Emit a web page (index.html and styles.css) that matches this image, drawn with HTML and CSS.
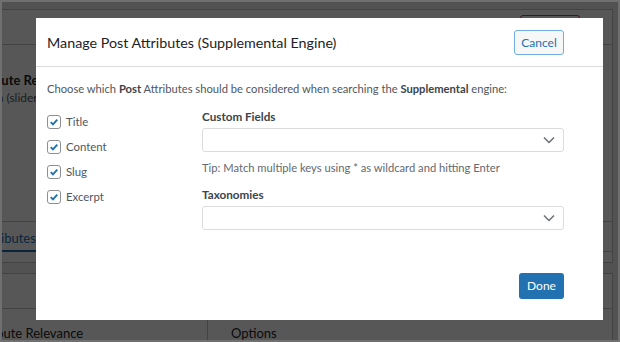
FILE: index.html
```html
<!DOCTYPE html>
<html lang="en">
<head>
	<meta charset="UTF-8">
	<meta name="viewport" content="width=device-width, initial-scale=1.0">
	<title>Manage Post Attributes</title>
	<link rel="stylesheet" href="styles.css">
</head>
<body>
	<div id="screen">
		<!-- page behind the modal -->
		<div class="panel">
			<div class="panel-head">
				<span class="btn-remove"></span>
				<span class="toggle">&#9650;</span>
			</div>
			<div class="panel-body">
				<p class="attr-title">Attribute Relevance</p>
				<p class="attr-desc">Search (slider)</p>
			</div>
			<div class="tabs">
				<span class="tab on">Post Attributes</span>
			</div>
			<div class="panel-foot"></div>
		</div>
		<div class="panel second">
			<div class="panel-head">
				<span class="btn-remove"></span>
				<span class="toggle">&#9650;</span>
			</div>
			<div class="cols">
				<div class="col-a">Attribute Relevance</div>
				<div class="col-b">Options</div>
			</div>
		</div>

		<div id="backdrop"></div>

		<div id="modal">
			<div class="modal-head">
				<h2>Manage Post Attributes (Supplemental Engine)</h2>
				<a href="javascript:;" class="btn-cancel">Cancel</a>
			</div>
			<div class="modal-body">
				<p class="intro">Choose which <b>Post</b> Attributes should be considered when searching the <b>Supplemental</b> engine:</p>
				<div class="grid">
					<ul class="checks">
						<li><span class="box"><svg viewBox="0 0 14 14"><path d="M3.2 7.2l2.6 2.7 5-5.6" /></svg></span>Title</li>
						<li><span class="box"><svg viewBox="0 0 14 14"><path d="M3.2 7.2l2.6 2.7 5-5.6" /></svg></span>Content</li>
						<li><span class="box"><svg viewBox="0 0 14 14"><path d="M3.2 7.2l2.6 2.7 5-5.6" /></svg></span>Slug</li>
						<li><span class="box"><svg viewBox="0 0 14 14"><path d="M3.2 7.2l2.6 2.7 5-5.6" /></svg></span>Excerpt</li>
					</ul>
					<div class="fields">
						<label>Custom Fields</label>
						<div class="select"><svg viewBox="0 0 12 8"><path d="M1 1.5l5 5 5-5" /></svg></div>
						<p class="tip">Tip: Match multiple keys using * as wildcard and hitting Enter</p>
						<label>Taxonomies</label>
						<div class="select"><svg viewBox="0 0 12 8"><path d="M1 1.5l5 5 5-5" /></svg></div>
					</div>
				</div>
			</div>
			<div class="modal-foot">
				<a href="javascript:;" class="btn-done">Done</a>
			</div>
		</div>
	</div>
</body>
</html>
```

FILE: styles.css
```css
* {
    margin: 0;
    padding: 0;
    box-sizing: border-box;
    text-decoration: none;
}

body {
    font-family: Lato, "Open Sans", sans-serif;
    color: #1d2327;
}

#screen {
    position: relative;
    width: 620px;
    height: 342px;
    overflow: hidden;
    background: #f0f0f1;
    border: 2px solid #707070;
    padding-top: 7px;
}

/* page behind */
.panel {
    margin-left: -80px;
    margin-right: 5px;
    background: #fff;
    border: 1px solid #c3c4c7;
}

.panel.second {
    margin-top: 10px;
}

.panel-head {
    display: flex;
    align-items: center;
    justify-content: flex-end;
    height: 35px;
    border-bottom: 1px solid #c3c4c7;
}

.btn-remove {
    width: 60px;
    height: 24px;
    border: 1px solid #d63638;
    border-radius: 3px;
    margin-right: 11px;
}

.toggle {
    width: 18px;
    font-size: 8px;
    color: #50575e;
    margin-right: 3px;
}

.panel-body {
    height: 176px;
    padding: 27px 0 0 45px;
    font-size: 13px;
}

.attr-title {
    font-weight: 700;
    line-height: 17px;
}

.attr-desc {
    color: #50575e;
    font-size: 12px;
    line-height: 17px;
}

.tabs {
    height: 31px;
    border-top: 1px solid #c3c4c7;
    border-bottom: 1px solid #c3c4c7;
    padding-left: 28px;
}

.tab {
    display: inline-block;
    height: 30px;
    line-height: 32px;
    font-size: 13px;
    color: #2271b1;
    border-bottom: 2px solid #2271b1;
}

.panel-foot {
    height: 10px;
}

.cols {
    display: flex;
    height: 40px;
    font-size: 13px;
}

.col-a {
    width: 285px;
    padding: 16px 0 0 48px;
    border-right: 1px solid #c3c4c7;
}

.col-b {
    padding: 16px 0 0 23px;
}

#backdrop {
    position: absolute;
    top: 0;
    left: 0;
    right: 0;
    bottom: 0;
    background: rgba(0, 0, 0, .66);
}

/* modal */
#modal {
    position: absolute;
    left: 34px;
    top: 16px;
    width: 567px;
    height: 302px;
    background: #fff;
    display: flex;
    flex-direction: column;
}

.modal-head {
    display: flex;
    align-items: center;
    justify-content: space-between;
    height: 49px;
    padding: 0 39px 0 11px;
    border-bottom: 1px solid #dcdcde;
}

.modal-head h2 {
    font-size: 14.3px;
    font-weight: 400;
    color: #1d2327;
}

.btn-cancel {
    display: block;
    width: 50px;
    height: 25px;
    line-height: 23px;
    text-align: center;
    font-size: 12px;
    color: #2271b1;
    background: #f6f7f7;
    border: 1px solid #72aee6;
    border-radius: 3px;
}

.modal-body {
    flex: 1;
    padding: 14px 39px 0 11px;
}

.intro {
    font-size: 11.2px;
    color: #50575e;
    line-height: 16px;
}

.intro b {
    font-weight: 700;
    color: #3c434a;
}

.grid {
    display: grid;
    grid-template-columns: 155px 1fr;
    margin-top: 11px;
}

.checks {
    list-style: none;
    padding-top: 1px;
}

.checks li {
    display: flex;
    align-items: center;
    height: 25px;
    font-size: 11.4px;
    color: #50575e;
}

.box {
    width: 14px;
    height: 14px;
    border: 1px solid #8c8f94;
    border-radius: 3px;
    margin-right: 5px;
    display: flex;
}

.box svg {
    width: 12px;
    height: 12px;
    fill: none;
    stroke: #2271b1;
    stroke-width: 2.2;
}

.fields label {
    display: block;
    font-size: 11.7px;
    font-weight: 700;
    color: #3c434a;
    line-height: 16px;
}

.select {
    display: flex;
    align-items: center;
    justify-content: flex-end;
    height: 24px;
    margin-top: 4px;
    border: 1px solid #dcdcde;
    border-radius: 3px;
    padding-right: 8px;
}

.select svg {
    width: 12px;
    height: 8px;
    fill: none;
    stroke: #6b6f74;
    stroke-width: 1.5;
}

.tip {
    font-size: 11.2px;
    color: #646970;
    line-height: 16px;
    margin: 8px 0 10px;
}

.modal-foot {
    display: flex;
    justify-content: flex-end;
    padding: 0 39px 21px 0;
}

.btn-done {
    display: block;
    width: 45px;
    height: 26px;
    line-height: 26px;
    text-align: center;
    font-size: 12px;
    color: #fff;
    background: #2271b1;
    border-radius: 3px;
}
```
